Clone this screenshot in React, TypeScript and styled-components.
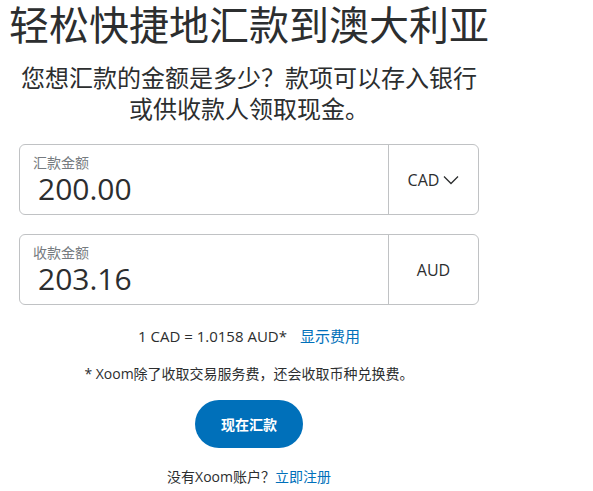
import React from "react";
import styled, { createGlobalStyle } from "styled-components";

const GlobalStyle = createGlobalStyle`
  html, body {
    margin: 0;
    padding: 0;
    background: #ffffff;
  }
  body {
    font-family: "Open Sans", "Noto Sans CJK SC", sans-serif;
    color: #2c2e2f;
  }
`;

const Page = styled.div`
  width: 460px;
  margin-left: 19px;
  display: flex;
  flex-direction: column;
  align-items: center;
`;

const Title = styled.h1`
  margin: 0;
  padding-top: 2px;
  width: 500px;
  font-family: "Noto Sans CJK SC", sans-serif;
  font-size: 40px;
  font-weight: 400;
  line-height: 42px;
  text-align: center;
  white-space: nowrap;
`;

const Subtitle = styled.p`
  margin: 17px 0 0;
  font-family: "Noto Sans CJK SC", sans-serif;
  font-size: 24px;
  line-height: 31px;
  text-align: center;
  white-space: nowrap;
`;

const Form = styled.div`
  width: 100%;
  margin-top: 21px;
  display: flex;
  flex-direction: column;
  gap: 19px;
`;

const Field = styled.div`
  height: 71px;
  box-sizing: border-box;
  border: 1px solid #c0c2c4;
  border-radius: 6px;
  display: flex;
`;

const AmountBox = styled.div`
  flex: 1;
  padding: 9px 0 0 13px;
  display: flex;
  flex-direction: column;
  gap: 2px;
`;

const Label = styled.span`
  font-family: "Noto Sans CJK SC", sans-serif;
  font-size: 14px;
  line-height: 16px;
  color: #767b80;
`;

const Amount = styled.span`
  margin-left: 5px;
  font-size: 30px;
  line-height: 34px;
  color: #2c2e2f;
`;

const Currency = styled.div`
  width: 89px;
  border-left: 1px solid #c0c2c4;
  display: flex;
  align-items: center;
  justify-content: center;
  gap: 4px;
  font-size: 16px;
  color: #2c2e2f;
`;

const Rate = styled.div`
  margin-top: 20px;
  font-size: 15px;
  line-height: 22px;
  display: flex;
  gap: 13px;
`;

const Link = styled.a`
  color: #0070ba;
  text-decoration: none;
  font-family: "Noto Sans CJK SC", sans-serif;
`;

const Note = styled.p`
  margin: 18px 0 0;
  font-size: 14px;
  line-height: 18px;
  white-space: nowrap;
`;

const SendButton = styled.button`
  margin-top: 17px;
  width: 108px;
  height: 48px;
  border: none;
  border-radius: 24px;
  background: #0070ba;
  color: #ffffff;
  font-family: "Noto Sans CJK SC", sans-serif;
  font-size: 14px;
  font-weight: 700;
  cursor: pointer;
`;

const SignUp = styled.p`
  margin: 19px 0 0;
  font-size: 14px;
  line-height: 18px;
`;

const Chevron = () => (
  <svg width="16" height="10" viewBox="0 0 16 10" fill="none">
    <path d="M1 1.5l7 7 7-7" stroke="#2c2e2f" strokeWidth="1.3" />
  </svg>
);

const App: React.FC = () => {
  return (
    <>
      <GlobalStyle />
      <Page>
        <Title>轻松快捷地汇款到澳大利亚</Title>
        <Subtitle>
          您想汇款的金额是多少？款项可以存入银行
          <br />
          或供收款人领取现金。
        </Subtitle>
        <Form>
          <Field>
            <AmountBox>
              <Label>汇款金额</Label>
              <Amount>200.00</Amount>
            </AmountBox>
            <Currency>
              CAD <Chevron />
            </Currency>
          </Field>
          <Field>
            <AmountBox>
              <Label>收款金额</Label>
              <Amount>203.16</Amount>
            </AmountBox>
            <Currency>AUD</Currency>
          </Field>
        </Form>
        <Rate>
          <span>1 CAD = 1.0158 AUD*</span>
          <Link href="#">显示费用</Link>
        </Rate>
        <Note>* Xoom除了收取交易服务费，还会收取币种兑换费。</Note>
        <SendButton>现在汇款</SendButton>
        <SignUp>
          没有Xoom账户？<Link href="#">立即注册</Link>
        </SignUp>
      </Page>
    </>
  );
};

export default App;
